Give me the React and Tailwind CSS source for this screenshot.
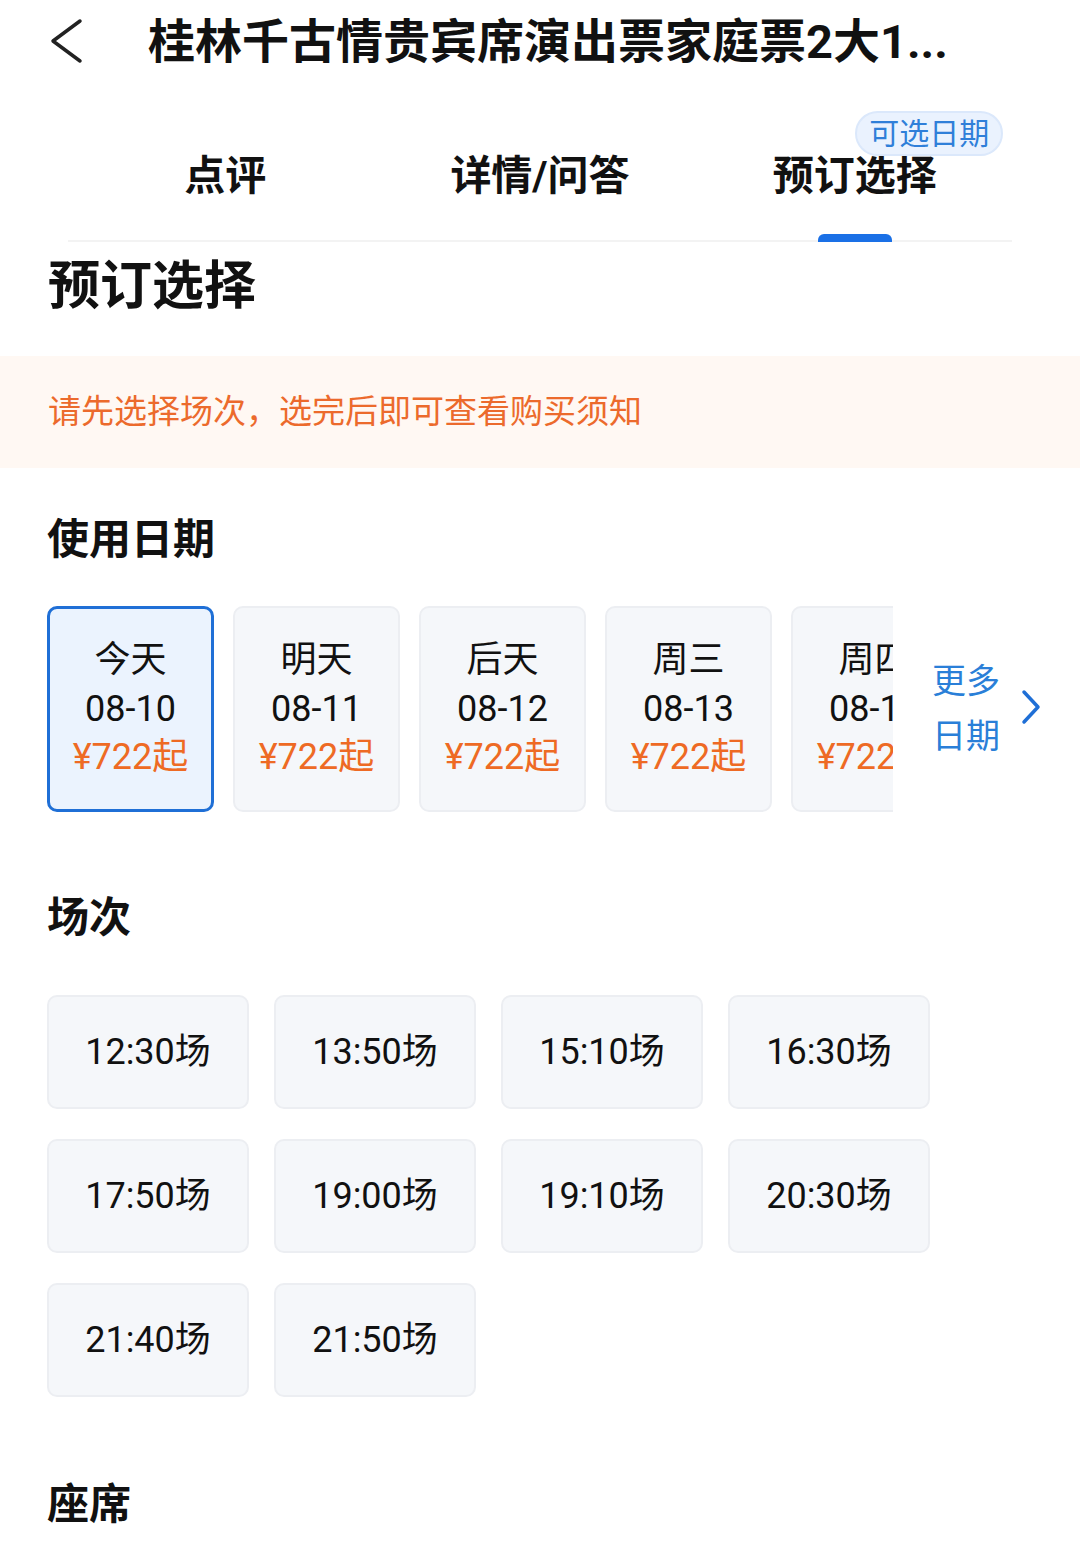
const dates = [
  { day: '今天', date: '08-10', price: '¥722起', active: true },
  { day: '明天', date: '08-11', price: '¥722起' },
  { day: '后天', date: '08-12', price: '¥722起' },
  { day: '周三', date: '08-13', price: '¥722起' },
  { day: '周四', date: '08-14', price: '¥722起' }
]

const sessions = ['12:30场', '13:50场', '15:10场', '16:30场', '17:50场', '19:00场', '19:10场', '20:30场', '21:40场', '21:50场']

function App() {
  return (
    <div
      className="w-[1080px] min-h-[1559px] bg-white text-[#111111] overflow-hidden"
      style={{ fontFamily: 'Roboto, "Noto Sans CJK SC", sans-serif' }}
    >
      <div className="flex items-center h-[82px] pl-[48px]">
        <svg width="36" height="46" viewBox="0 0 36 46" fill="none">
          <path d="M32 3 L5 23 L32 43" stroke="#222" strokeWidth="3.5" strokeLinecap="round" strokeLinejoin="round" />
        </svg>
        <h1 className="ml-[64px] text-[47px] font-bold leading-none whitespace-nowrap">桂林千古情贵宾席演出票家庭票2大1...</h1>
      </div>

      <div className="mx-[68px] h-[160px] border-b-2 border-[#f3f3f3] grid grid-cols-3">
        <div className="flex items-center justify-center pt-[32px] text-[41px] font-bold">点评</div>
        <div className="flex items-center justify-center pt-[32px] text-[41px] font-bold">详情/问答</div>
        <div className="relative flex items-center justify-center pt-[32px] text-[41px] font-bold">
          预订选择
          <span className="absolute top-[29px] left-[158px] h-[45px] px-[12px] flex items-center rounded-full border-2 border-[#dbe8fb] bg-[#eaf2fe] text-[30px] leading-none font-normal text-[#2f7fd9] whitespace-nowrap">
            可选日期
          </span>
          <span className="absolute bottom-[-2px] left-[121px] w-[74px] h-[8px] rounded-t-[6px] bg-[#1a70e6]" />
        </div>
      </div>

      <h2 className="pl-[48px] pt-[15px] text-[52px] font-bold leading-[60px]">预订选择</h2>

      <div className="mt-[39px] h-[112px] bg-[#fff8f3] flex items-center px-[48px] text-[33px] text-[#ec6a2c]">
        请先选择场次，选完后即可查看购买须知
      </div>

      <div className="px-[47px]">
        <h3 className="mt-[48px] text-[42px] font-bold leading-[48px]">使用日期</h3>

        <div className="mt-[42px] flex items-center">
          <div className="shrink-0 w-[846px] overflow-hidden flex gap-[19px]">
            {dates.map((d) => (
              <div
                key={d.date}
                className={`shrink-0 w-[167px] h-[206px] rounded-[10px] flex flex-col items-center justify-center text-[36px] leading-[48.5px] ${
                  d.active ? 'border-[3px] border-[#1f6fd6] bg-[#ebf3fe]' : 'border-2 border-[#eceef2] bg-[#f5f7fa]'
                }`}
              >
                <span>{d.day}</span>
                <span>{d.date}</span>
                <span className="text-[#ee6a24]">{d.price}</span>
              </div>
            ))}
          </div>
          <div className="ml-[39px] flex items-center shrink-0">
            <div className="flex flex-col text-[34px] leading-[55px] text-[#2a7fd8] whitespace-nowrap">
              <span>更多</span>
              <span>日期</span>
            </div>
            <svg className="ml-[20px] mb-[4px]" width="22" height="36" viewBox="0 0 22 36" fill="none">
              <path d="M4 3 L18 18 L4 33" stroke="#1f6fd6" strokeWidth="3.5" strokeLinecap="round" strokeLinejoin="round" />
            </svg>
          </div>
        </div>

        <h3 className="mt-[82px] text-[42px] font-bold leading-[48px]">场次</h3>

        <div className="mt-[53px] grid grid-cols-[repeat(4,202px)] gap-x-[25px] gap-y-[30px]">
          {sessions.map((s) => (
            <div
              key={s}
              className="h-[114px] rounded-[10px] border-2 border-[#eceef2] bg-[#f5f7fa] flex items-center justify-center text-[36px]"
            >
              {s}
            </div>
          ))}
        </div>

        <h3 className="mt-[84px] text-[42px] font-bold leading-[48px]">座席</h3>
      </div>
    </div>
  )
}

export default App
